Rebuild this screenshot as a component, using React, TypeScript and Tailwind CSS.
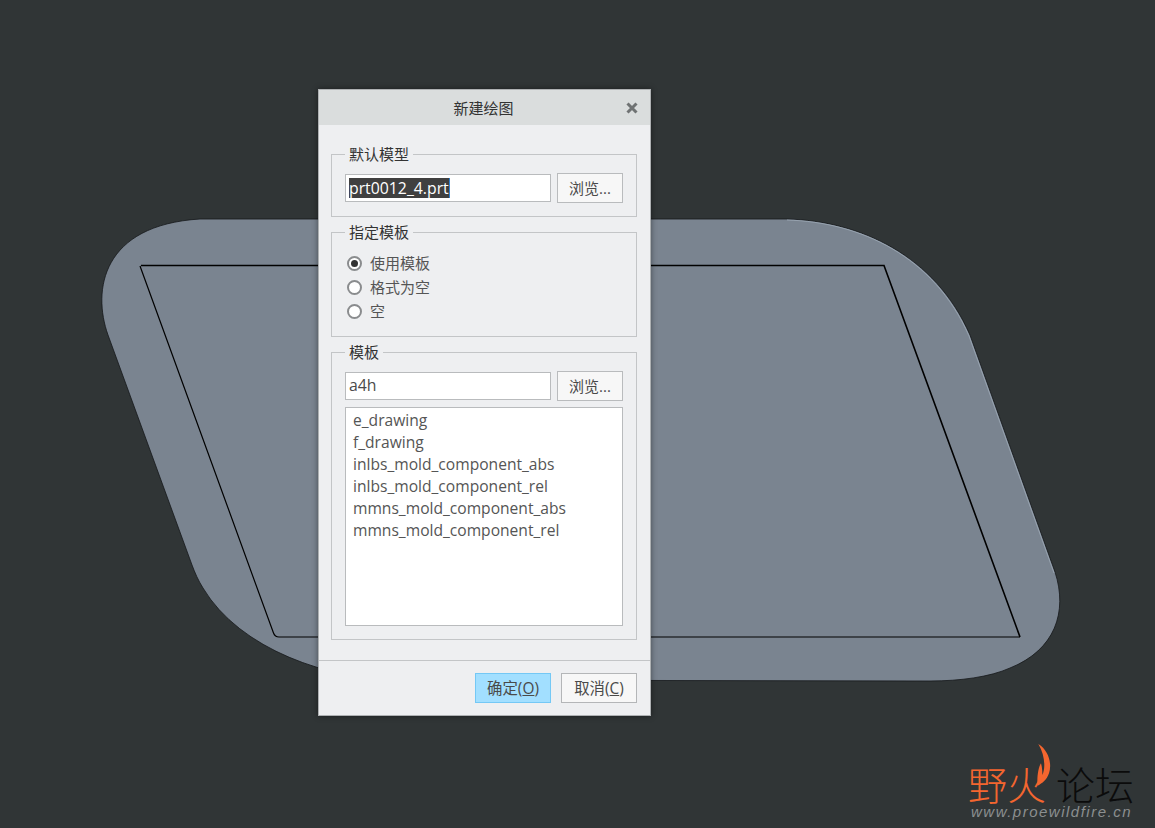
const font = "[font-family:'Open_Sans','Noto_Sans_CJK_SC',sans-serif]";

const templates = [
  "e_drawing",
  "f_drawing",
  "inlbs_mold_component_abs",
  "inlbs_mold_component_rel",
  "mmns_mold_component_abs",
  "mmns_mold_component_rel",
];

const radios = [
  { label: "使用模板", checked: true },
  { label: "格式为空", checked: false },
  { label: "空", checked: false },
];

const PartDrawing = () => (
  <svg className="absolute left-0 top-0" width="1155" height="828" viewBox="0 0 1155 828" fill="none">
    <path
      d="M200 219 L787 219 C860 221 935 255 970 335 L1055 572 C1068 612 1055 650 1010 668 C990 677 960 681 930 681 L400 680 C330 680 240 650 203 588 C198 580 195 573 192 565 L108 335 C92 290 102 225 200 219 Z"
      fill="#7a8490"
      stroke="#15181a"
      strokeWidth="0.8"
    />
    <path d="M787 220 C860 222 934 256 969 336 L1054 573" stroke="#a3b0bd" strokeWidth="0.7" />
    <path d="M141 265.500 L884 265.500 L1020 637" stroke="#000" strokeWidth="1.600" />
    <path d="M1020 637 L279 637 Q275 637 273.500 633 L140 266" stroke="#000" strokeWidth="1.200" />
  </svg>
);

const BrowseButton = () => (
  <button className="flex h-[30px] w-[66px] items-center justify-center border border-[#b9bbbd] bg-[#f7f7f7] text-[15px] text-[#4a4a4a]">
    浏览...
  </button>
);

const Group = ({ title, className, children }: { title: string; className: string; children: React.ReactNode }) => (
  <fieldset className={`border border-[#c3c5c7] px-[13px] ${className}`}>
    <legend className="px-[4px] text-[15px] leading-[21px] text-[#333]">{title}</legend>
    {children}
  </fieldset>
);

const Radio = ({ label, checked }: { label: string; checked: boolean }) => (
  <div className="flex h-[24px] items-center gap-[8px] pl-[2px] text-[15px] text-[#555]">
    <span className="flex h-[15px] w-[15px] items-center justify-center rounded-full border-2 border-[#8a8c8e] bg-white">
      {checked && <span className="h-[7px] w-[7px] rounded-full bg-[#333]" />}
    </span>
    {label}
  </div>
);

const Logo = () => (
  <div className="absolute left-[955px] top-[735px] h-[90px] w-[190px]">
    <svg className="absolute left-0 top-0" width="190" height="90" viewBox="0 0 570 270">
      <path
        d="M250 27 C280 45 292 85 282 115 C275 135 262 145 248 152 C245 130 250 95 258 85 C262 100 262 110 262 120 C272 100 270 60 250 27 Z"
        fill="#f4662f"
      />
    </svg>
    <div className="absolute left-[13px] top-[29px] flex text-[39px] leading-[38px] font-light [font-family:'Noto_Sans_CJK_SC',sans-serif]">
      <span className="text-[#f4662f]">野火</span>
      <span className="ml-[10px] text-[#0b0b0b]">论坛</span>
    </div>
    <div className="absolute left-[16px] top-[69px] text-[15px] leading-[16px] italic tracking-[1.5px] text-[#8b8f90] [font-family:'Liberation_Sans',sans-serif]">
      www.proewildfire.cn
    </div>
  </div>
);

export default function App() {
  return (
    <div className={`relative h-[828px] w-[1155px] overflow-hidden bg-[#303536] pl-[318px] pt-[89px] ${font}`}>
      <PartDrawing />
      <div className="relative flex h-[627px] w-[333px] flex-col border border-[#aeb1b3] bg-[#eeeff1] shadow-[0_0_6px_rgba(0,0,0,0.45)]">
        <div className="relative flex h-[35px] shrink-0 items-center justify-center bg-[#dadddd] pr-[2px] pt-[1px] text-[15px] text-[#333]">
          新建绘图
          <svg className="absolute right-[12px] top-[12px]" width="12" height="12" viewBox="0 0 12 12">
            <path d="M1.500 1.500 L10.500 10.500 M10.500 1.500 L1.500 10.500" stroke="#6f7273" strokeWidth="3" />
          </svg>
        </div>

        <div className="flex flex-col gap-[5px] pl-[12px] pr-[13px] pt-[19px]">
          <Group title="默认模型" className="pb-[13px]">
            <div className="mt-[8px] flex items-center gap-[6px]">
              <div className="flex h-[28px] w-[206px] items-center border border-[#b9bbbd] bg-white pl-[3px] text-[15.800px] text-white">
                <span className="border-r border-[#2f80d0] bg-[#404040] leading-[20px]">prt0012_4.prt</span>
              </div>
              <BrowseButton />
            </div>
          </Group>

          <Group title="指定模板" className="pb-[13px]">
            <div className="mt-[8px] flex flex-col">
              {radios.map((radio) => (
                <Radio key={radio.label} label={radio.label} checked={radio.checked} />
              ))}
            </div>
          </Group>

          <Group title="模板" className="pb-[13px]">
            <div className="mt-[8px] flex items-center gap-[6px]">
              <div className="flex h-[28px] w-[206px] items-center border border-[#b9bbbd] bg-white pl-[3px] text-[15.800px] text-[#4a4a4a]">
                a4h
              </div>
              <BrowseButton />
            </div>
            <ul className="mt-[6px] h-[219px] w-[278px] border border-[#b9bbbd] bg-white pl-[7px] pt-[1px] text-[15.600px] leading-[22px] text-[#555]">
              {templates.map((name) => (
                <li key={name}>{name}</li>
              ))}
            </ul>
          </Group>
        </div>

        <div className="mt-[20px] border-t border-[#c3c5c7]" />

        <div className="flex justify-end gap-[10px] pr-[13px] pt-[12px] text-[15.400px] text-[#4a4a4a]">
          <button className="flex h-[30px] w-[76px] items-center justify-center border border-[#74c8f5] bg-[#a2dfff] pt-[1px]">
            确定(<span className="underline">O</span>)
          </button>
          <button className="flex h-[30px] w-[76px] items-center justify-center border border-[#b4b6b8] bg-[#f7f7f7] pt-[1px]">
            取消(<span className="underline">C</span>)
          </button>
        </div>
      </div>
      <Logo />
    </div>
  );
}
